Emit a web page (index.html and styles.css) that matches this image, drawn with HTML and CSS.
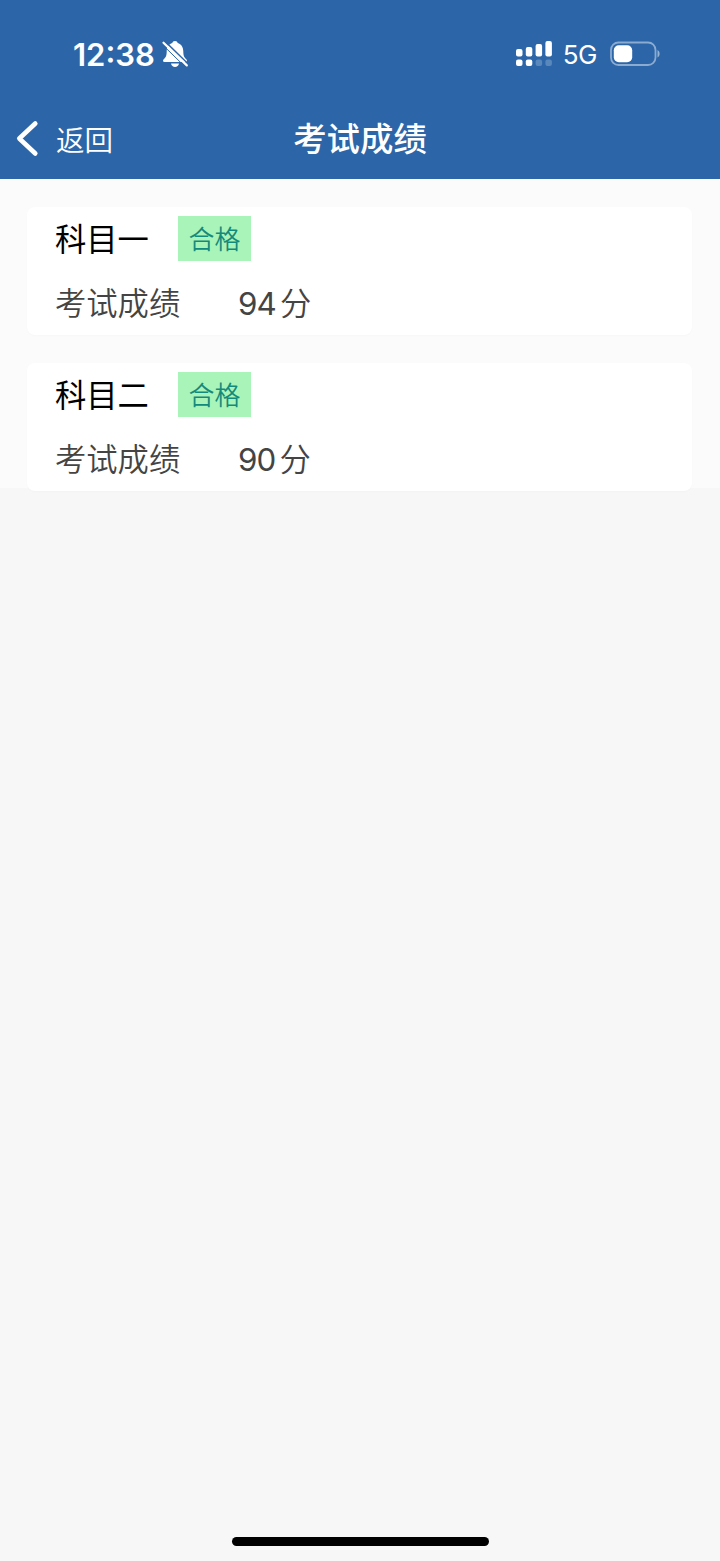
FILE: index.html
```html
<!DOCTYPE html>
<html lang="zh-CN">
<head>
    <meta charset="UTF-8">
    <meta name="viewport" content="width=device-width, initial-scale=1.0">
    <title>考试成绩</title>
    <link rel="stylesheet" href="styles.css">
</head>
<body>
    <!-- Header -->
    <header class="header">
        <div class="status-bar">
            <div class="status-left">
                <span class="time">12:38</span>
                <svg class="bell" width="28" height="28" viewBox="0 0 28 28">
                    <path d="M14 1c-1.500 0-2.500.9-2.700 2.100C7.700 4.200 5.700 7.300 5.700 11.500c0 4.500-1 6-3.200 8-.8.8-.6 2.500.9 2.500h21.200c1.500 0 1.700-1.700.9-2.500-2.200-2-3.200-3.500-3.200-8 0-4.200-2-7.300-5.600-8.400C16.500 1.900 15.500 1 14 1z" fill="#fff"/>
                    <path d="M10 23.600h8c-.4 2.100-2 3.400-4 3.400s-3.600-1.300-4-3.400z" fill="#fff"/>
                    <path d="M4 1.400L28 24.800" stroke="#2c66a9" stroke-width="1.500"/>
                    <path d="M2.500 2.700L25.800 25.400" stroke="#fff" stroke-width="2.200" stroke-linecap="round"/>
                    <path d="M1 4.300L24.500 27.200" stroke="#2c66a9" stroke-width="1"/>
                </svg>
            </div>
            <div class="status-right">
                <svg class="signal" width="37" height="26" viewBox="0 0 37 26" fill="#fff">
                    <rect x="0" y="8" width="6.500" height="7.500" rx="2"/>
                    <rect x="9.800" y="6" width="6.500" height="9.500" rx="2"/>
                    <rect x="19.600" y="3" width="6.500" height="12.500" rx="2"/>
                    <rect x="29.400" y="0" width="6.500" height="15.500" rx="2"/>
                    <rect x="0" y="18.500" width="6.500" height="6.500" rx="2"/>
                    <rect x="9.800" y="18.500" width="6.500" height="6.500" rx="2"/>
                    <rect x="19.600" y="18.500" width="6.500" height="6.500" rx="2" opacity=".22"/>
                    <rect x="29.400" y="18.500" width="6.500" height="6.500" rx="2" opacity=".22"/>
                </svg>
                <span class="network">5G</span>
                <svg class="battery" width="51" height="26" viewBox="0 0 51 26">
                    <rect x="1" y="1.500" width="44.500" height="22.500" rx="7.500" fill="none" stroke="#fff" stroke-opacity=".45" stroke-width="1.800"/>
                    <rect x="3.800" y="4.200" width="18.400" height="17" rx="5" fill="#fff"/>
                    <path d="M47.500 9v7.500c2.800-1.300 2.800-6.200 0-7.500z" fill="#fff" opacity=".5"/>
                </svg>
            </div>
        </div>
        <div class="nav-bar">
            <a class="back" href="#">
                <svg width="24" height="38" viewBox="0 0 24 38">
                    <path d="M20.300 3.500L4.300 18.500L20.300 33.500" fill="none" stroke="#fff" stroke-width="4.600" stroke-linecap="round" stroke-linejoin="round"/>
                </svg>
                <span class="back-text">返回</span>
            </a>
            <h1 class="title">考试成绩</h1>
        </div>
    </header>

    <!-- Score list -->
    <main class="list">
        <div class="card">
            <div class="row">
                <span class="subject">科目一</span>
                <span class="badge">合格</span>
            </div>
            <div class="row score-row">
                <span class="label">考试成绩</span>
                <span class="score"><span class="number">94</span>分</span>
            </div>
        </div>
        <div class="card">
            <div class="row">
                <span class="subject">科目二</span>
                <span class="badge">合格</span>
            </div>
            <div class="row score-row">
                <span class="label">考试成绩</span>
                <span class="score"><span class="number">90</span>分</span>
            </div>
        </div>
    </main>

    <div class="home-indicator"></div>
</body>
</html>
```
FILE: styles.css
```css
* {
    box-sizing: border-box;
}
body {
    display: flex;
    flex-direction: column;
    margin: 0;
    height: 1561px;
    background-color: #f7f7f7;
    font-family: Inter, "Noto Sans CJK SC", sans-serif;
}

/* Header */
.header {
    height: 179px;
    background-color: #2c66a9;
    color: #fff;
}
.status-bar {
    display: flex;
    justify-content: space-between;
    align-items: center;
    height: 98px;
    padding: 10px 59px 0 73px;
}
.status-left,
.status-right {
    display: flex;
    align-items: center;
}
.time {
    font-size: 31px;
    font-weight: 600;
}
.bell {
    margin-left: 6px;
}
.network {
    margin: 1px 13px 0 10px;
    font-size: 26px;
    letter-spacing: -0.5px;
}
.nav-bar {
    display: grid;
    grid-template-columns: 1fr auto 1fr;
    align-items: center;
    height: 81px;
    padding-left: 15px;
    padding-right: 15px;
}
.back {
    display: flex;
    align-items: center;
    gap: 17px;
    color: #fff;
    font-size: 28.5px;
    font-weight: 350;
    line-height: 40px;
    text-decoration: none;
}
.back-text {
    padding-top: 4px;
}
.title {
    margin: 0;
    font-size: 33.4px;
    font-weight: 500;
    line-height: 48px;
}

/* Score list */
.list {
    display: flex;
    flex-direction: column;
    gap: 28px;
    height: 309px;
    padding: 28px 28px 0 27px;
    background-color: #fbfbfb;
}
.card {
    flex: none;
    height: 128px;
    padding: 9px 28px 0;
    border-radius: 8px;
    background-color: #fff;
    box-shadow: 0 1px 2px rgba(0, 0, 0, 0.02);
}
.row {
    display: flex;
    align-items: center;
    height: 45px;
    font-size: 31.3px;
    line-height: 45px;
}
.subject {
    width: 123px;
    padding-top: 4px;
    color: #000;
}
.badge {
    width: 73px;
    height: 45px;
    padding-top: 2px;
    background-color: #a9f5b9;
    color: #148a7c;
    font-size: 26px;
    font-weight: 350;
    line-height: 43px;
    text-align: center;
}
.score-row {
    margin-top: 21px;
    color: #444;
    font-weight: 350;
}
.label {
    width: 183px;
}
.number {
    margin-right: 4px;
    font-weight: 400;
    letter-spacing: -0.8px;
}

/* Home indicator */
.home-indicator {
    width: 257px;
    height: 9px;
    margin: auto auto 15px;
    border-radius: 5px;
    background-color: #000;
}
```
